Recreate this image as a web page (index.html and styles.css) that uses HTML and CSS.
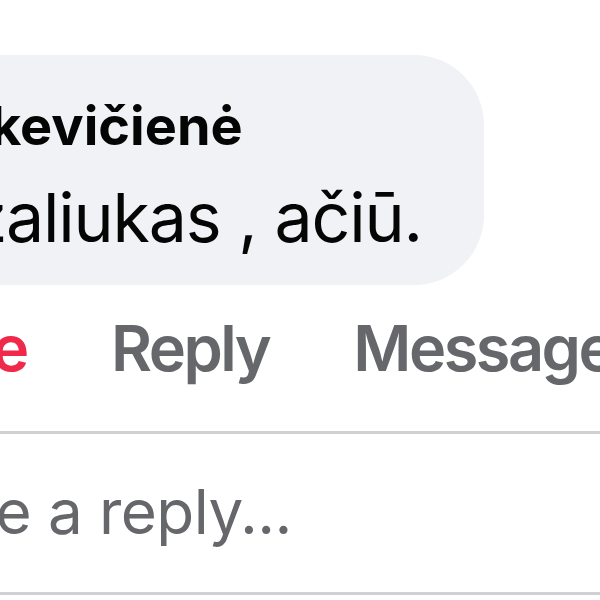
FILE: index.html
```html
<!DOCTYPE html>
<html lang="lt">
<head>
    <meta charset="UTF-8">
    <title>Comment</title>
    <link rel="stylesheet" href="styles.css">
</head>
<body>
    <div class="comment">
        <div class="bubble">
            <div class="author">kevičienė</div>
            <div class="text"><span class="cut-z">ž</span>aliukas , ačiū.</div>
        </div>
        <div class="actions">
            <a href="#" class="action loved">Love</a>
            <a href="#" class="action">Reply</a>
            <a href="#" class="action">Message</a>
        </div>
    </div>
    <div class="reply-box">
        <div class="reply-input">Write a reply...</div>
    </div>
</body>
</html>
```

FILE: styles.css
```css
html, body {
    margin: 0;
    padding: 0;
    background-color: #fff;
    overflow: hidden;
}
body {
    width: 600px;
    height: 600px;
    font-family: Inter, "Noto Sans", sans-serif;
    color: #050505;
}
.comment {
    padding-top: 55px;
}
.bubble {
    display: inline-block;
    margin-left: -80px;
    padding: 39px 62px 27px 80px;
    background-color: #f0f2f5;
    border-radius: 70px;
}
.author {
    font-size: 54px;
    font-weight: 700;
    line-height: 64px;
    margin-left: -10px;
}
.text {
    font-size: 68px;
    line-height: 82px;
    letter-spacing: -1.2px;
    margin-top: 18px;
    margin-left: -8px;
}
.cut-z {
    display: inline-block;
    width: 14px;
    overflow: hidden;
    direction: rtl;
    vertical-align: bottom;
}
.actions {
    display: flex;
    gap: 84px;
    margin-top: 22px;
    white-space: nowrap;
}
.action {
    font-size: 63px;
    font-weight: 600;
    line-height: 82px;
    letter-spacing: -2.5px;
    color: #65676b;
    text-decoration: none;
}
.action.loved {
    color: #f02849;
    margin-left: -109px;
}
.reply-box {
    margin-top: 42px;
    border-top: 3px solid #ced0d4;
    border-bottom: 3px solid #ced0d4;
    padding: 40px 0 42px;
}
.reply-input {
    font-size: 62px;
    line-height: 76px;
    letter-spacing: -0.6px;
    color: #65676b;
    margin-left: -120px;
    white-space: nowrap;
}
```
